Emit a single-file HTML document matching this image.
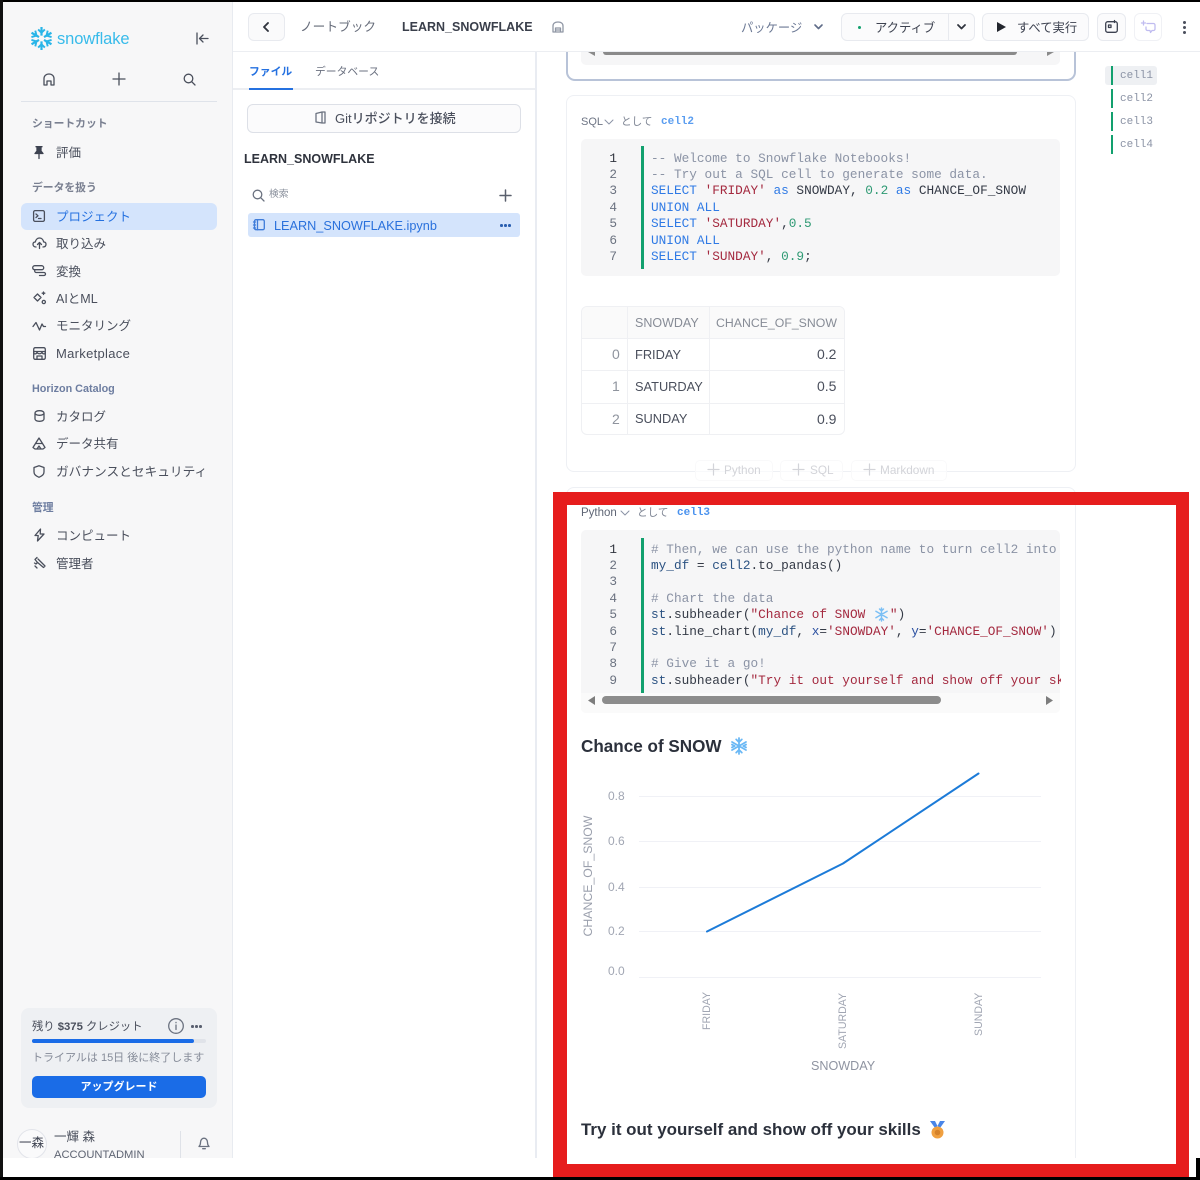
<!DOCTYPE html>
<html lang="ja"><head><meta charset="utf-8"><title>Snowflake Notebook</title>
<style>
*{box-sizing:border-box}
html,body{margin:0;padding:0;background:#fff}
#p{position:relative;width:1200px;height:1180px;overflow:hidden;background:#fff;font-family:"Liberation Sans","Noto Sans CJK JP",sans-serif;color:#3d4250;filter:blur(.35px)}
.a{position:absolute}
.t{position:absolute;white-space:nowrap;line-height:20px;height:20px;margin-top:1px}
.n{font-size:12.500px;color:#4a4f5c}
.tb{font-size:12.300px;color:#3d4250}
.h{font-size:10.800px;font-weight:700;color:#7a8091}
.m{font-family:"Liberation Mono","Noto Sans CJK JP",monospace}
.code{font-size:12.750px;line-height:16.400px;height:16.400px;white-space:pre;position:absolute;left:651px;color:#343a46;margin-top:1px}
.ln{font-size:12.750px;line-height:16.400px;height:16.400px;position:absolute;width:30px;text-align:right;left:587px;color:#6b7280;margin-top:1px}
.c{color:#8b93a5}.k{color:#2f7ae5}.s{color:#a4293f}.d{color:#2f9a74}.v{color:#2b5282}
svg{position:absolute;overflow:visible;fill:none;stroke:#4a4f5c;stroke-width:1.300;stroke-linecap:round;stroke-linejoin:round}
.btn{position:absolute;border:1px solid #e8eaef;border-radius:6px;background:#fff}
.td{position:absolute;font-size:12.800px;line-height:20px;white-space:nowrap;color:#4a4f5c}
.num{font-size:14px}
.ge{color:#8f949e;font-size:14px}
.add{position:absolute;top:460px;height:21px;border:1px solid #f9f9fa;border-radius:5px;background:rgba(255,255,255,.6)}
.at{position:absolute;top:460px;font-size:11.800px;line-height:20px;color:#d3d4d9;white-space:nowrap}
.pl{position:absolute;top:464px;stroke:#d3d4d9;stroke-width:1.200}
</style></head><body><div id="p">

<!-- sidebar -->
<div class="a" style="left:3px;top:2px;width:230px;height:1156px;background:#f7f7f8;border-right:1px solid #e8ebf0"></div>
<svg style="left:30px;top:27px;stroke:#29b5e8;stroke-width:2.300;stroke-linecap:butt" width="23" height="23" viewBox="0 0 24 24"><path d="M12 0v9M12 15v9M1.600 6l7.800 4.500M14.600 13.500L22.400 18M1.600 18l7.800-4.500M14.600 10.500L22.400 6"/><path d="M8.500 2.500L12 6l3.500-3.500M8.500 21.500L12 18l3.500 3.500M1.500 10.500L6.800 9l-1.300-5.200M22.500 10.500L17.200 9l1.300-5.200M1.500 13.500L6.800 15l-1.300 5.200M22.500 13.500L17.200 15l1.300 5.200" stroke-width="2"/></svg>
<div class="t" style="left:57px;top:28px;font-size:16.500px;color:#38bbea;letter-spacing:-.1px">snowflake</div>
<svg style="left:196px;top:32px" width="13" height="13" viewBox="0 0 13 13"><path d="M1 1v11M12 6.500H3.500M7 3L3.500 6.500 7 10"/></svg>
<svg style="left:43px;top:73px" width="12" height="13" viewBox="0 0 12 13"><path d="M1 12V5.500C1 3 3 1 6 1s5 2 5 4.500V12H8V8H4v4z"/></svg>
<svg style="left:113px;top:73px" width="12" height="12" viewBox="0 0 12 12"><path d="M6 0v12M0 6h12"/></svg>
<svg style="left:183px;top:73px" width="13" height="13" viewBox="0 0 13 13"><circle cx="5.500" cy="5.500" r="4.300"/><path d="M8.700 8.700L12 12"/></svg>
<div class="a" style="left:21px;top:101px;width:196px;height:1px;background:#dfe3ea"></div>
<div class="t h" style="left:32px;top:113px">ショートカット</div>
<svg style="left:34px;top:146px;fill:#3d4250;stroke:#3d4250" width="10" height="13" viewBox="0 0 10 13"><path d="M2 .7h6M3 1v4L1 7.500h8L7 5V1zM5 8v4.500"/></svg>
<div class="t n" style="left:56px;top:142px">評価</div>
<div class="t h" style="left:32px;top:177px">データを扱う</div>
<div class="a" style="left:21px;top:203px;width:196px;height:27px;background:#d4e4fc;border-radius:6px"></div>
<svg style="left:33px;top:210px" width="12" height="12" viewBox="0 0 12 12"><rect x=".6" y=".6" width="10.800" height="10.800" rx="1.500"/><path d="M3 4l2 1.800L3 7.500M5.500 8.500h2.500"/></svg>
<div class="t n" style="left:56px;top:206px;color:#2571e0">プロジェクト</div>
<svg style="left:32px;top:237px" width="15" height="12" viewBox="0 0 15 12"><path d="M4 10C2 10 1 8.800 1 7.300 1 5.800 2 5 3.300 5 3.800 2.500 5.500 1 7.500 1s3.700 1.500 4.200 4C13 5 14 5.800 14 7.300 14 8.800 13 10 11 10M7.500 11.500V6M5.500 7.500l2-2 2 2"/></svg>
<div class="t n" style="left:56px;top:233px">取り込み</div>
<svg style="left:32px;top:265px" width="14" height="11" viewBox="0 0 14 11"><rect x=".7" y=".7" width="11" height="4" rx="2"/><path d="M2.700 4.700V6a1.500 1.500 0 0 0 1.500 1.500h8M6 7.500h6a1.500 1.500 0 0 1 0 3H7.500"/></svg>
<div class="t n" style="left:56px;top:261px">変換</div>
<svg style="left:32px;top:291px" width="15" height="14" viewBox="0 0 15 14"><path d="M5.500 3L9 6.500 5.500 10 2 6.500zM11.500 1v2.500M10.200 2.200h2.600"/><circle cx="11.800" cy="11" r="1.600"/></svg>
<div class="t n" style="left:56px;top:288px">AIとML</div>
<svg style="left:32px;top:319px" width="14" height="13" viewBox="0 0 14 13"><path d="M1 7.500L4 3.500 7.500 11 10 5l1.500 2.500H13.500"/></svg>
<div class="t n" style="left:56px;top:315px">モニタリング</div>
<svg style="left:33px;top:347px" width="13" height="13" viewBox="0 0 13 13"><rect x=".7" y=".7" width="11.600" height="11.600" rx="1.500"/><path d="M.7 4.500h11.600M4 4.500c0 3-3.300 3-3.300 1M4 4.500c0 3 5 3 5 0M9 4.500c0 3 3.300 3 3.300 1M4 12.300V9h5v3.300"/></svg>
<div class="t n" style="left:56px;top:343px;font-size:13px;letter-spacing:.3px">Marketplace</div>
<div class="t h" style="left:32px;top:378px;color:#6d7da0">Horizon Catalog</div>
<svg style="left:34px;top:410px" width="11" height="12" viewBox="0 0 11 12"><path d="M1 3v6c0 1.300 1.800 2.300 4.500 2.300S10 10.300 10 9V3M1 3c0-1.300 1.800-2.300 4.500-2.300S10 1.700 10 3 8.200 5.300 5.500 5.300 1 4.300 1 3z"/></svg>
<div class="t n" style="left:56px;top:406px">カタログ</div>
<svg style="left:32px;top:437px" width="14" height="13" viewBox="0 0 14 13"><path d="M7 1L10.500 6.500H3.500zM3.500 6.500L1 10.500 3 12h8l2-1.500-2.500-4M5 12l2-3 2 3"/></svg>
<div class="t n" style="left:56px;top:433px">データ共有</div>
<svg style="left:33px;top:465px" width="12" height="13" viewBox="0 0 12 13"><path d="M6 .8L11 2.500V7c0 2.500-2.500 4.300-5 5.300C3.500 11.300 1 9.500 1 7V2.500z"/></svg>
<div class="t n" style="left:56px;top:461px;font-size:12.700px">ガバナンスとセキュリティ</div>
<div class="t h" style="left:32px;top:497px;color:#6d7da0">管理</div>
<svg style="left:33px;top:528px" width="13" height="14" viewBox="0 0 13 14"><path d="M7.500 1L2 7.500h3.200L4.500 13 11 6H7.200z"/></svg>
<div class="t n" style="left:56px;top:525px">コンピュート</div>
<svg style="left:33px;top:556px" width="13" height="13" viewBox="0 0 13 13"><path d="M4 1.500L2 3.500 4.500 6.500 3 8l-1.500-1M5 3l7 7-1.500 1.500L4 6M2 10l2 2"/></svg>
<div class="t n" style="left:56px;top:553px">管理者</div>

<div class="a" style="left:21px;top:1008px;width:196px;height:100px;background:#eef0f3;border-radius:8px"></div>
<div class="t" style="left:32px;top:1016px;font-size:11.300px;color:#4a4f5c">残り <b>$375</b> クレジット</div>
<svg style="left:168px;top:1018px;stroke:#6b7280" width="16" height="16" viewBox="0 0 16 16"><circle cx="8" cy="8" r="7.300"/><path d="M8 7v4.500M8 4.400v.3"/></svg>
<div class="a" style="left:191px;top:1025px;width:2.500px;height:2.500px;border-radius:50%;background:#5a6070;box-shadow:4px 0 0 #5a6070,8px 0 0 #5a6070"></div>
<div class="a" style="left:32px;top:1039px;width:174px;height:4px;background:#e0e3e9;border-radius:2px"></div>
<div class="a" style="left:32px;top:1039px;width:162px;height:4px;background:#1a6ce7;border-radius:2px"></div>
<div class="t" style="left:32px;top:1047px;font-size:11px;color:#858b98">トライアルは 15日 後に終了します</div>
<div class="a" style="left:32px;top:1076px;width:174px;height:22px;background:#1a6ce7;border-radius:5px;text-align:center;color:#fff;font-size:11px;font-weight:700;line-height:23px">アップグレード</div>
<div class="a" style="left:17px;top:1129px;width:30px;height:30px;border:1px solid #e2e4ea;border-radius:50%;background:#fafafb"></div>
<div class="t" style="left:19px;top:1132px;font-size:12.500px;color:#3d4250">一森</div>
<div class="t" style="left:54px;top:1126px;font-size:12.500px;color:#4a4f5c">一輝 森</div>
<div class="t" style="left:54px;top:1144px;font-size:11.200px;color:#5f6573">ACCOUNTADMIN</div>
<div class="a" style="left:180px;top:1131px;width:1px;height:27px;background:#dfe2e8"></div>
<svg style="left:198px;top:1137px;stroke:#6b7280" width="12" height="13" viewBox="0 0 12 13"><path d="M1 9.500c1-1 1.500-2 1.500-4C2.500 3 4 1.200 6 1.200S9.500 3 9.500 5.500c0 2 .5 3 1.500 4zM4.700 11.700h2.600"/></svg>

<!-- bottom strip cover -->
<div class="a" style="left:0;top:1158px;width:1200px;height:22px;background:#fff;z-index:2"></div>

<!-- top bar -->
<div class="a" style="left:233px;top:51px;width:967px;height:1px;background:#eceef2"></div>
<div class="btn" style="left:248px;top:13px;width:37px;height:28px;background:#fafafb"></div>
<svg style="left:263px;top:22px;stroke:#30343e;stroke-width:1.900" width="6" height="10" viewBox="0 0 6 10"><path d="M5 1L1 5l4 4"/></svg>
<div class="t" style="left:300px;top:16px;font-size:12.700px;color:#666c7a">ノートブック</div>
<div class="t" style="left:402px;top:16px;font-size:12.500px;font-weight:700;color:#3a3f4b">LEARN_SNOWFLAKE</div>
<svg style="left:552px;top:21px;stroke:#9097a5" width="12" height="12" viewBox="0 0 12 12"><path d="M1 11V5c0-2.500 2-4 5-4s5 1.500 5 4v6zM3.500 11V7h5v4M3.500 9h5"/></svg>
<div class="t tb" style="left:741px;top:17px;color:#6d7a96">パッケージ</div>
<svg style="left:814px;top:24px;stroke:#5f6c88;stroke-width:1.600" width="9" height="6" viewBox="0 0 9 6"><path d="M1 1l3.500 3.500L8 1"/></svg>
<div class="btn" style="left:841px;top:13px;width:134px;height:28px;background:#fbfbfc"></div>
<div class="a" style="left:948px;top:13px;width:1px;height:28px;background:#e8eaef"></div>
<div class="a" style="left:858px;top:26px;width:3px;height:3px;border-radius:50%;background:#12a06e"></div>
<div class="t tb" style="left:875px;top:17px">アクティブ</div>
<svg style="left:957px;top:24px;stroke:#30343e;stroke-width:1.800" width="9" height="6" viewBox="0 0 9 6"><path d="M1 1l3.500 3.500L8 1"/></svg>
<div class="btn" style="left:982px;top:13px;width:107px;height:28px;background:#fbfbfc"></div>
<svg style="left:997px;top:22px;fill:#23262e;stroke:none" width="9" height="10" viewBox="0 0 9 10"><path d="M0 0l9 5-9 5z"/></svg>
<div class="t tb" style="left:1017px;top:17px">すべて実行</div>
<div class="btn" style="left:1097px;top:13px;width:29px;height:28px;background:#fbfbfc"></div>
<svg style="left:1105px;top:20px;stroke:#3d4250" width="13" height="13" viewBox="0 0 13 13"><rect x=".7" y="1.700" width="11.600" height="10.600" rx="2"/><path d="M9.500.5v2"/><rect x="3.500" y="5" width="2.500" height="2.500"/></svg>
<div class="btn" style="left:1134px;top:13px;width:28px;height:28px;border-color:#f0f1f5"></div>
<svg style="left:1141px;top:20px;stroke:#c0bcf0" width="15" height="14" viewBox="0 0 15 14"><path d="M6 3.500h6.500A1.500 1.500 0 0 1 14 5v4a1.500 1.500 0 0 1-1.500 1.500H11L9.500 12.500 9 10.500H6.500A1.500 1.500 0 0 1 5 9V7M2.500 1v4M.5 3h4"/></svg>
<div class="a" style="left:1183px;top:21px;width:3px;height:3px;border-radius:50%;background:#4a4f5c;box-shadow:0 5px 0 #4a4f5c,0 10px 0 #4a4f5c"></div>

<!-- file panel -->
<div class="a" style="left:535px;top:52px;width:2px;height:1106px;background:#e9ecf2"></div>
<div class="t" style="left:249px;top:61px;font-size:10.800px;font-weight:700;color:#2571e0">ファイル</div>
<div class="t" style="left:315px;top:61px;font-size:10.800px;color:#6b7180">データベース</div>
<div class="a" style="left:233px;top:88px;width:302px;height:2px;background:#eceef2"></div>
<div class="a" style="left:249px;top:87.500px;width:44px;height:2px;background:#2571e0"></div>
<div class="btn" style="left:247px;top:104px;width:274px;height:29px;border-color:#dde0e7;background:#fbfbfc"></div>
<svg style="left:315px;top:111px;stroke:#6b7280" width="11" height="13" viewBox="0 0 11 13"><path d="M7 1h3v11H7L1 11V2.500zM7 1v11"/></svg>
<div class="t" style="left:335px;top:108px;font-size:13px;color:#4a4f5c;font-weight:500">Gitリポジトリを接続</div>
<div class="t" style="left:244px;top:148px;font-size:12.500px;font-weight:700;color:#2f333d">LEARN_SNOWFLAKE</div>
<svg style="left:252px;top:189px;stroke:#6b7280" width="13" height="13" viewBox="0 0 13 13"><circle cx="5.500" cy="5.500" r="4.300"/><path d="M8.700 8.700L12 12"/></svg>
<div class="t" style="left:269px;top:184px;font-size:9.800px;color:#8a909c">検索</div>
<svg style="left:500px;top:190px;stroke:#5a606d;stroke-width:1.500" width="11" height="11" viewBox="0 0 11 11"><path d="M5.500 0v11M0 5.500h11"/></svg>
<div class="a" style="left:248px;top:213px;width:272px;height:24px;background:#d4e4fc;border-radius:3px"></div>
<svg style="left:253px;top:219px;stroke:#3f7cd9" width="12" height="12" viewBox="0 0 12 12"><rect x="1.500" y=".7" width="9.800" height="10" rx="1.500"/><path d="M4.500 .7v10M.5 3h2M.5 6h2M.5 9h2"/></svg>
<div class="t" style="left:274px;top:215px;font-size:12.700px;color:#2a71dc">LEARN_SNOWFLAKE.ipynb</div>
<div class="a" style="left:500px;top:224px;width:2.500px;height:2.500px;border-radius:50%;background:#2a5fb0;box-shadow:4px 0 0 #2a5fb0,8px 0 0 #2a5fb0"></div>

<!-- cell 1 remnant -->
<div class="a" style="left:566px;top:52px;width:510px;height:29px;border:2px solid #b8c3d8;border-top:0;border-radius:0 0 9px 9px;background:#fff"></div>
<div class="a" style="left:581px;top:52px;width:479px;height:13px;background:#f6f6f7;border-radius:0 0 5px 5px"></div>
<div class="a" style="left:603px;top:52px;width:414px;height:3px;background:#8a8a8a;border-radius:0 0 3px 3px"></div>
<svg style="left:588px;top:52px;fill:#8a8a8a;stroke:none" width="7" height="4" viewBox="0 0 7 4"><path d="M0 0h7v4z"/></svg>
<svg style="left:1047px;top:52px;fill:#8a8a8a;stroke:none" width="7" height="4" viewBox="0 0 7 4"><path d="M0 0h7L0 4z"/></svg>

<!-- cell navigation -->
<div class="a" style="left:1105px;top:66px;width:52px;height:19px;background:#eef0f3;border-radius:3px"></div>
<div class="a" style="left:1111px;top:66px;width:2px;height:19px;background:#12a06e"></div>
<div class="a" style="left:1111px;top:89px;width:2px;height:19px;background:#12a06e"></div>
<div class="a" style="left:1111px;top:112px;width:2px;height:19px;background:#12a06e"></div>
<div class="a" style="left:1111px;top:135px;width:2px;height:19px;background:#12a06e"></div>
<div class="t m" style="left:1120px;top:65px;font-size:11px;color:#8b93a5">cell1</div>
<div class="t m" style="left:1120px;top:88px;font-size:11px;color:#8b93a5">cell2</div>
<div class="t m" style="left:1120px;top:111px;font-size:11px;color:#8b93a5">cell3</div>
<div class="t m" style="left:1120px;top:134px;font-size:11px;color:#8b93a5">cell4</div>

<!-- cell 2 -->
<div class="a" style="left:566px;top:95px;width:510px;height:377px;border:1px solid #eef0f4;border-radius:8px"></div>
<div class="t" style="left:581px;top:111px;font-size:11px;color:#6d7484">SQL</div>
<svg style="left:604px;top:119px;stroke:#8b93a5;stroke-width:1" width="10" height="6" viewBox="0 0 10 6"><path d="M1 1l4 4 4-4"/></svg>
<div class="t" style="left:621px;top:111px;font-size:10.600px;color:#7d8493">として</div>
<div class="t m" style="left:661px;top:111px;font-size:11px;color:#5a9df0;font-weight:700">cell2</div>
<div class="a" style="left:581px;top:139px;width:479px;height:137px;background:#f6f6f7;border-radius:5px"></div>
<div class="a" style="left:641px;top:146px;width:3px;height:123px;background:#12a06e"></div>
<div class="ln m" style="top:149.500px;color:#30343e">1</div><div class="ln m" style="top:165.900px">2</div><div class="ln m" style="top:182.300px">3</div><div class="ln m" style="top:198.700px">4</div><div class="ln m" style="top:215.100px">5</div><div class="ln m" style="top:231.500px">6</div><div class="ln m" style="top:247.900px">7</div>
<div class="code m c" style="top:149.500px">-- Welcome to Snowflake Notebooks!</div>
<div class="code m c" style="top:165.900px">-- Try out a SQL cell to generate some data.</div>
<div class="code m" style="top:182.300px"><span class="k">SELECT</span> <span class="s">'FRIDAY'</span> <span class="k">as</span> SNOWDAY, <span class="d">0.2</span> <span class="k">as</span> CHANCE_OF_SNOW</div>
<div class="code m k" style="top:198.700px">UNION ALL</div>
<div class="code m" style="top:215.100px"><span class="k">SELECT</span> <span class="s">'SATURDAY'</span>,<span class="d">0.5</span></div>
<div class="code m k" style="top:231.500px">UNION ALL</div>
<div class="code m" style="top:247.900px"><span class="k">SELECT</span> <span class="s">'SUNDAY'</span>, <span class="d">0.9</span>;</div>

<!-- table -->
<div class="a" style="left:581px;top:306px;width:264px;height:129px;border:1px solid #eff0f3;border-radius:6px;overflow:hidden">
  <div class="a" style="left:0;top:0;width:262px;height:32px;background:#fafafa;border-bottom:1px solid #eff0f3"></div>
  <div class="a" style="left:0;top:63px;width:262px;height:1px;background:#eff0f3"></div>
  <div class="a" style="left:0;top:96px;width:262px;height:1px;background:#eff0f3"></div>
  <div class="a" style="left:45px;top:0;width:1px;height:128px;background:#eff0f3"></div>
  <div class="a" style="left:127px;top:0;width:1px;height:128px;background:#eff0f3"></div>
</div>
<div class="td" style="left:635px;top:312.500px;color:#878c96;font-size:12.500px">SNOWDAY</div>
<div class="td" style="left:716px;top:312.500px;color:#878c96;font-size:12.300px">CHANCE_OF_SNOW</div>
<div class="td ge" style="left:612px;top:344px">0</div><div class="td" style="left:635px;top:345px">FRIDAY</div><div class="td num" style="left:817px;top:344px">0.2</div>
<div class="td ge" style="left:612px;top:376px">1</div><div class="td" style="left:635px;top:377px">SATURDAY</div><div class="td num" style="left:817px;top:376px">0.5</div>
<div class="td ge" style="left:612px;top:409px">2</div><div class="td" style="left:635px;top:409px">SUNDAY</div><div class="td num" style="left:817px;top:409px">0.9</div>

<div class="add" style="left:695px;width:78px"></div>
<div class="add" style="left:780px;width:63px"></div>
<div class="add" style="left:851px;width:96px"></div>
<svg class="pl" style="left:708px" width="11" height="11" viewBox="0 0 11 11"><path d="M5.500 0v11M0 5.500h11"/></svg>
<svg class="pl" style="left:793px" width="11" height="11" viewBox="0 0 11 11"><path d="M5.500 0v11M0 5.500h11"/></svg>
<svg class="pl" style="left:864px" width="11" height="11" viewBox="0 0 11 11"><path d="M5.500 0v11M0 5.500h11"/></svg>
<div class="at" style="left:724px">Python</div>
<div class="at" style="left:810px">SQL</div>
<div class="at" style="left:880px">Markdown</div>

<!-- cell 3 -->
<div class="a" style="left:566px;top:487px;width:510px;height:671px;border:1px solid #eef0f4;border-bottom:0;border-radius:8px 8px 0 0"></div>
<div class="t" style="left:581px;top:502px;font-size:11.500px;color:#5f6675">Python</div>
<svg style="left:620px;top:510px;stroke:#8b93a5;stroke-width:1" width="10" height="6" viewBox="0 0 10 6"><path d="M1 1l4 4 4-4"/></svg>
<div class="t" style="left:637px;top:502px;font-size:10.600px;color:#7d8493">として</div>
<div class="t m" style="left:677px;top:502px;font-size:11px;color:#4a92ee;font-weight:700">cell3</div>
<div class="a" style="left:581px;top:530px;width:479px;height:183px;background:#f6f6f7;border-radius:5px"></div>
<div class="a" style="left:641px;top:538px;width:3px;height:155px;background:#12a06e"></div>
<div class="a" style="left:581px;top:693px;width:479px;height:20px;background:#fafafa;border-radius:0 0 5px 5px"></div>
<div class="ln m" style="top:540.500px;color:#30343e">1</div><div class="ln m" style="top:556.900px">2</div><div class="ln m" style="top:573.300px">3</div><div class="ln m" style="top:589.700px">4</div><div class="ln m" style="top:606.100px">5</div><div class="ln m" style="top:622.500px">6</div><div class="ln m" style="top:638.900px">7</div><div class="ln m" style="top:655.300px">8</div><div class="ln m" style="top:671.700px">9</div>
<div class="a" style="left:651px;top:538px;width:410px;height:156px;overflow:hidden">
<div class="code m c" style="left:0;top:2.500px"># Then, we can use the python name to turn cell2 into a Pandas</div>
<div class="code m" style="left:0;top:18.900px"><span class="v">my_df</span> = <span class="v">cell2</span>.to_pandas()</div>
<div class="code m c" style="left:0;top:51.700px"># Chart the data</div>
<div class="code m" style="left:0;top:68.100px"><span class="v">st</span>.subheader(<span class="s">"Chance of SNOW </span><span style="display:inline-block;width:17px"></span><span class="s">"</span>)</div>
<div class="code m" style="left:0;top:84.500px"><span class="v">st</span>.line_chart(<span class="v">my_df</span>, <span style="color:#2a4fa0">x</span>=<span class="s">'SNOWDAY'</span>, <span style="color:#2a4fa0">y</span>=<span class="s">'CHANCE_OF_SNOW'</span>)</div>
<div class="code m c" style="left:0;top:117.300px"># Give it a go!</div>
<div class="code m" style="left:0;top:133.700px"><span class="v">st</span>.subheader(<span class="s">"Try it out yourself and show off your skills</span></div>
</div>
<svg style="left:875px;top:608px;stroke:#7cc0f5;stroke-width:1.500" width="13" height="13" viewBox="0 0 13 13"><path d="M6.500 0v13M.9 3.250l11.200 6.500M.9 9.750l11.200-6.500M4.500 1l2 2 2-2M4.500 12l2-2 2 2"/></svg>
<div class="a" style="left:602px;top:696px;width:339px;height:8px;background:#8c8c8c;border-radius:4px"></div>
<svg style="left:588px;top:696px;fill:#7d7d7d;stroke:none" width="8" height="9" viewBox="0 0 8 9"><path d="M7 0v9L0 4.500z"/></svg>
<svg style="left:1046px;top:696px;fill:#7d7d7d;stroke:none" width="8" height="9" viewBox="0 0 8 9"><path d="M0 0v9l7-4.500z"/></svg>

<div class="t" style="left:581px;top:736px;font-size:17.100px;font-weight:700;color:#2b303b">Chance of SNOW</div>
<svg style="left:731px;top:738px;stroke:#6ab8f5;stroke-width:1.900" width="16" height="16" viewBox="0 0 17 17"><path d="M8.500 0v17M1.100 4.250l14.800 8.500M1.100 12.750l14.800-8.500M5.500 1.500l3 3 3-3M5.500 15.500l3-3 3 3M1 7l3 1.500L1 10M16 7l-3 1.500 3 1.500"/></svg>

<!-- chart -->
<div class="a" style="left:639px;top:796px;width:402px;height:1px;background:#f0f1f6"></div>
<div class="a" style="left:639px;top:841px;width:402px;height:1px;background:#f0f1f6"></div>
<div class="a" style="left:639px;top:887px;width:402px;height:1px;background:#f0f1f6"></div>
<div class="a" style="left:639px;top:931px;width:402px;height:1px;background:#f0f1f6"></div>
<div class="a" style="left:639px;top:977px;width:402px;height:1px;background:#f0f1f6"></div>
<svg style="left:0;top:0;stroke:#1c7bd8;stroke-width:2" width="1200" height="1180"><path d="M707 931.500L843 863.500 978.500 773.500"/></svg>
<div class="t" style="left:608px;top:785px;font-size:12px;color:#a1a6b3">0.8</div>
<div class="t" style="left:608px;top:830px;font-size:12px;color:#a1a6b3">0.6</div>
<div class="t" style="left:608px;top:876px;font-size:12px;color:#a1a6b3">0.4</div>
<div class="t" style="left:608px;top:920px;font-size:12px;color:#a1a6b3">0.2</div>
<div class="t" style="left:608px;top:960px;font-size:12px;color:#a1a6b3">0.0</div>
<div class="t" style="left:588px;top:875px;font-size:12.300px;color:#9a9fac;transform:translate(-50%,-50%) rotate(-90deg)">CHANCE_OF_SNOW</div>
<div class="t" style="left:707px;top:1029px;font-size:10.600px;color:#a1a6b3;transform-origin:0 0;transform:translate(-10px,0) rotate(-90deg)">FRIDAY</div>
<div class="t" style="left:843px;top:1048px;font-size:10.600px;color:#a1a6b3;transform-origin:0 0;transform:translate(-10px,0) rotate(-90deg)">SATURDAY</div>
<div class="t" style="left:979px;top:1035px;font-size:10.600px;color:#a1a6b3;transform-origin:0 0;transform:translate(-10px,0) rotate(-90deg)">SUNDAY</div>
<div class="t" style="left:811px;top:1055px;font-size:12.600px;color:#8f94a1">SNOWDAY</div>

<div class="t" style="left:581px;top:1119px;font-size:16.950px;font-weight:700;color:#2b303b">Try it out yourself and show off your skills</div>
<svg style="left:929px;top:1121px;stroke:none" width="17" height="18" viewBox="0 0 17 18"><path d="M1 0h5l2.500 5L6 7zM16 0h-5L8.500 5 11 7z" fill="#4a86e8"/><circle cx="8.500" cy="11.500" r="6" fill="#f0a040"/><circle cx="8.500" cy="11.500" r="2.800" fill="#d5822a"/></svg>

<!-- red frame -->
<div class="a" style="left:553px;top:492px;width:636px;height:685px;border:solid #e61d1d;border-width:13px 13px 13px 14px;z-index:4"></div>

<!-- black edges -->
<div class="a" style="left:0;top:0;width:1200px;height:2px;background:#000;z-index:5"></div>
<div class="a" style="left:0;top:0;width:3px;height:1177px;background:#111;z-index:5"></div>
<div class="a" style="left:0;top:1176.500px;width:1200px;height:4px;background:#000;z-index:5"></div>
<div class="a" style="left:1196px;top:1158px;width:4px;height:22px;background:#000;z-index:5"></div>
</div></body></html>
